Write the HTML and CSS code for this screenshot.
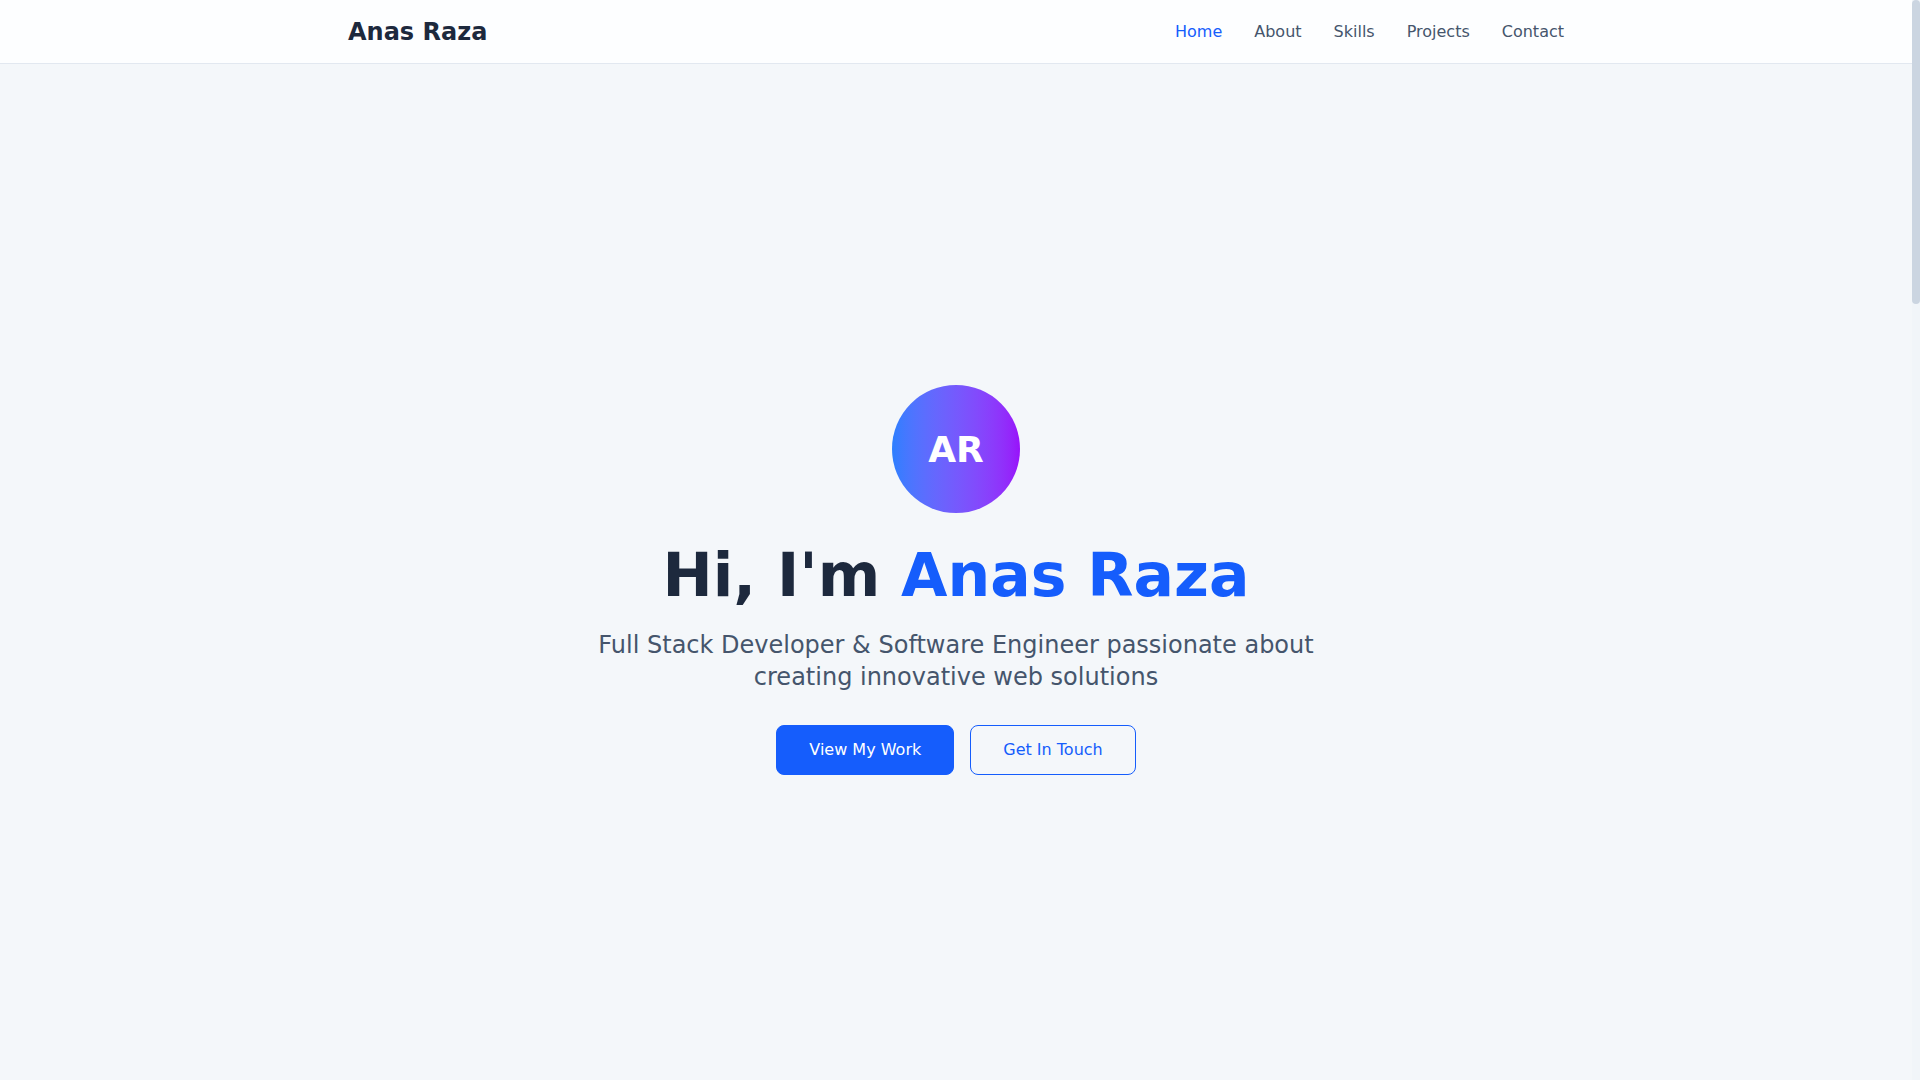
FILE: index.html
```html
<!DOCTYPE html>
<html lang="en">
<head>
<meta charset="utf-8">
<title>Anas Raza</title>
<link rel="stylesheet" href="styles.css">
</head>
<body>
<header class="navbar">
  <div class="container nav-inner">
    <a class="brand" href="#">Anas Raza</a>
    <nav class="nav-links">
      <a class="nav-link active" href="#home">Home</a>
      <a class="nav-link" href="#about">About</a>
      <a class="nav-link" href="#skills">Skills</a>
      <a class="nav-link" href="#projects">Projects</a>
      <a class="nav-link" href="#contact">Contact</a>
    </nav>
  </div>
</header>
<main>
  <section class="hero" id="home">
    <div class="hero-content">
      <div class="avatar">AR</div>
      <h1 class="hero-title">Hi, I'm <span class="accent">Anas Raza</span></h1>
      <p class="hero-sub">Full Stack Developer &amp; Software Engineer passionate about creating innovative web solutions</p>
      <div class="hero-actions">
        <a class="btn btn-primary" href="#projects">View My Work</a>
        <a class="btn btn-outline" href="#contact">Get In Touch</a>
      </div>
    </div>
  </section>
  <section class="section" id="about"></section>
  <section class="section" id="skills"></section>
  <section class="section" id="projects"></section>
</main>
<div class="scrollbar" aria-hidden="true"><div class="scrollbar-thumb"></div></div>
</body>
</html>
```

FILE: styles.css
```css
* { box-sizing: border-box; }

html, body {
  margin: 0;
  padding: 0;
}

body {
  font-family: "DejaVu Sans", "Noto Sans", sans-serif;
  background: #f4f7fa;
  color: #1d293d;
  padding-right: 8px;
}

::-webkit-scrollbar { width: 8px; }
::-webkit-scrollbar-track { background: #f1f5f9; }
::-webkit-scrollbar-thumb { background: #cbd5e1; border-radius: 4px; }

.scrollbar {
  position: fixed;
  top: 0;
  right: 0;
  width: 8px;
  height: 100vh;
  background: #f1f5f9;
  z-index: 100;
}

.scrollbar-thumb {
  width: 8px;
  height: 304px;
  background: #cbd5e1;
  border-radius: 4px;
}

a { text-decoration: none; }

.container {
  max-width: 1280px;
  margin: 0 auto;
  padding: 0 32px;
}

.navbar {
  position: sticky;
  top: 0;
  z-index: 10;
  background: #fdfeff;
  border-bottom: 1px solid #e2e8f0;
}

.nav-inner {
  height: 63px;
  display: flex;
  align-items: center;
  justify-content: space-between;
}

.brand {
  font-size: 24px;
  font-weight: 700;
  color: #1d293d;
}

.nav-links {
  display: flex;
  gap: 32px;
}

.nav-link {
  font-size: 16px;
  color: #45556c;
}

.nav-link.active { color: #155dfc; }

.hero {
  min-height: 1016px;
  display: flex;
  align-items: center;
  justify-content: center;
  padding-top: 16px;
}

.hero-content {
  display: flex;
  flex-direction: column;
  align-items: center;
  text-align: center;
}

.avatar {
  width: 128px;
  height: 128px;
  border-radius: 50%;
  background: linear-gradient(to right in oklab, #2b7fff, #9810fa);
  color: #fff;
  font-size: 36px;
  font-weight: 700;
  display: flex;
  align-items: center;
  justify-content: center;
  margin-bottom: 32px;
}

.hero-title {
  margin: 0 0 24px;
  font-size: 60px;
  line-height: 1;
  font-weight: 700;
  color: #1d293d;
}

.accent { color: #155dfc; }

.hero-sub {
  margin: 0 0 32px;
  max-width: 768px;
  font-size: 24px;
  line-height: 32px;
  color: #45556c;
}

.hero-actions {
  display: flex;
  gap: 16px;
}

.btn {
  display: inline-block;
  padding: 12px 32px;
  font-size: 16px;
  line-height: 24px;
  border-radius: 8px;
  border: 1px solid #155dfc;
}

.btn-primary {
  background: #155dfc;
  color: #fff;
}

.btn-outline {
  background: transparent;
  color: #155dfc;
}

.section {
  height: 920px;
}
```
